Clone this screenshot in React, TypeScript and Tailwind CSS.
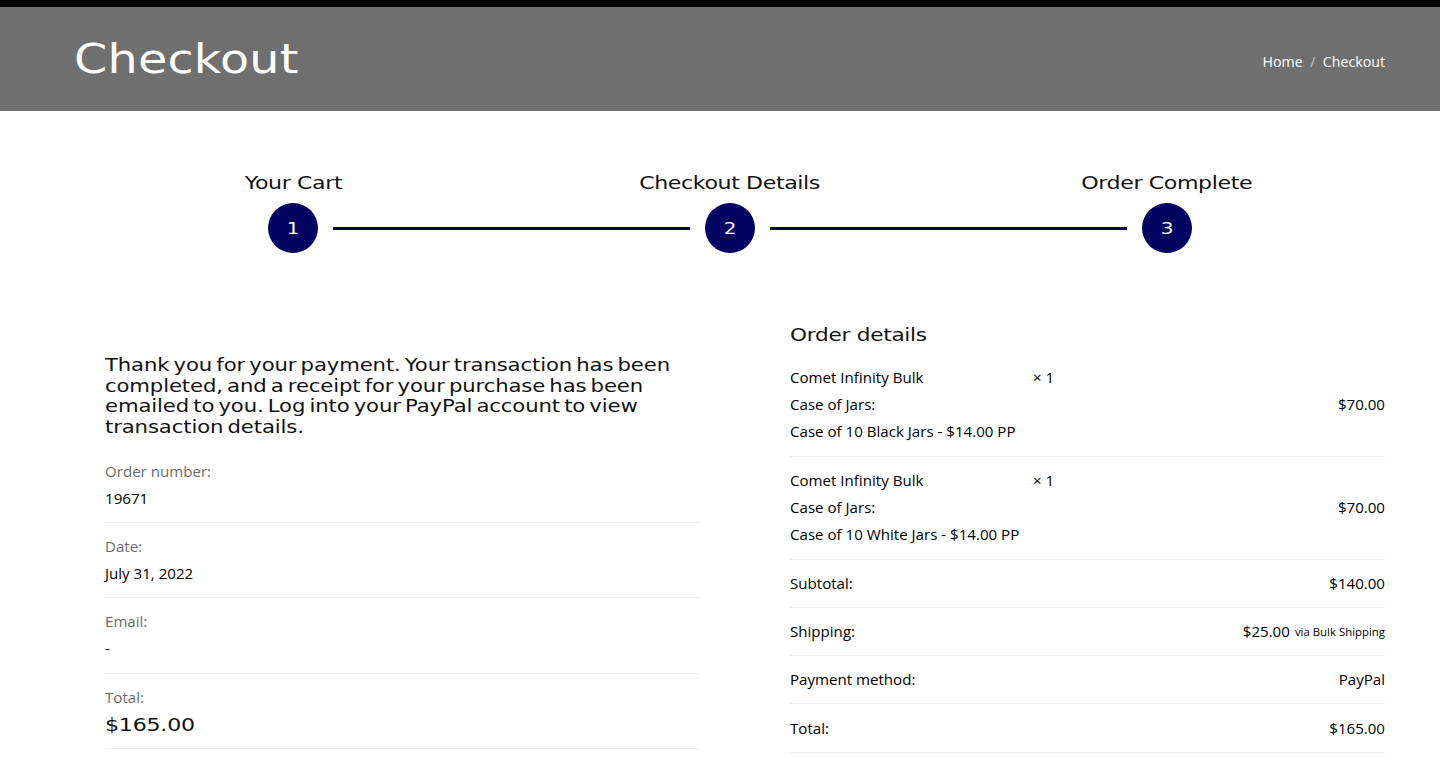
import React from 'react';

const display = "font-['DejaVu_Sans',sans-serif]";

const steps = ['Your Cart', 'Checkout Details', 'Order Complete'];

const summary = [
    { label: 'Order number:', value: '19671' },
    { label: 'Date:', value: 'July 31, 2022' },
    { label: 'Email:', value: '-' },
];

const items = ['Case of 10 Black Jars - $14.00 PP', 'Case of 10 White Jars - $14.00 PP'];

const App: React.FC = () => {
    return (
        <div className="h-[758px] overflow-hidden bg-white text-[15.1px] leading-[27px] text-black font-['Open_Sans',sans-serif]">
            {/* Page title */}
            <header className="flex h-[111px] items-center justify-between border-t-[7px] border-black bg-[#6f6f6f] pl-[74px] pr-[55px] text-white">
                <h1 className={`${display} inline-block origin-left scale-x-[1.19] text-[40px] leading-[48px] font-normal tracking-[0.2px]`}>
                    Checkout
                </h1>
                <nav className="mt-[5px] flex items-center text-[14.2px]">
                    <span>Home</span>
                    <span className="mx-[7.5px] text-white/60">/</span>
                    <span>Checkout</span>
                </nav>
            </header>

            {/* Steps */}
            <div className="flex items-end pl-[268px] pt-[60px]">
                {steps.map((step, i) => (
                    <React.Fragment key={step}>
                        {i > 0 && <div className="mx-[15px] mb-[23px] h-[3px] w-[357px] bg-[#020249]" />}
                        <div className="flex w-[50px] flex-col items-center">
                            <span className={`${display} mb-[8px] scale-x-[1.3] whitespace-nowrap text-[17px] leading-[24px] tracking-[-0.3px] text-[#111]`}>
                                {step}
                            </span>
                            <div className={`${display} flex h-[50px] w-[50px] items-center justify-center rounded-full bg-[#020260] text-[16px] text-white`}>
                                <span className="inline-block scale-x-[1.25]">{i + 1}</span>
                            </div>
                        </div>
                    </React.Fragment>
                ))}
            </div>

            <div className="flex pl-[105px] pr-[55px]">
                {/* Thank you + summary */}
                <section className="w-[594px] pt-[102px]">
                    <p className={`${display} w-[490px] origin-left scale-x-[1.21] text-[17.5px] leading-[20.7px] tracking-[-0.1px] [word-spacing:-2px] text-[#111]`}>
                        Thank you for your payment. Your transaction has been completed, and a receipt for your purchase has been emailed to you. Log into your PayPal account to view transaction details.
                    </p>
                    <div className="mt-[10px]">
                        {summary.map((row) => (
                            <div key={row.label} className="border-b border-[#eeeeee] pb-[10.3px] pt-[10px]">
                                <div className="text-[#6b6b6b]">{row.label}</div>
                                <div>{row.value}</div>
                            </div>
                        ))}
                        <div className="border-b border-[#eeeeee] pb-[10.3px] pt-[10px]">
                            <div className="text-[#6b6b6b]">Total:</div>
                            <div className={`${display} origin-left scale-x-[1.23] text-[18px] tracking-[-0.2px] text-[#111]`}>$165.00</div>
                        </div>
                    </div>
                </section>

                {/* Order details */}
                <section className="ml-[91px] w-[595px] pt-[68px]">
                    <h2 className={`${display} origin-left scale-x-[1.27] text-[17px] leading-[28px] font-normal tracking-[-0.2px] text-[#111]`}>
                        Order details
                    </h2>
                    <div className="mt-[4.5px]">
                        {items.map((item) => (
                            <div key={item} className="flex items-center justify-between border-b border-[#eeeeee] py-[10.5px]">
                                <div>
                                    <div className="flex">
                                        <span className="w-[243px]">Comet Infinity Bulk</span>
                                        <span>× 1</span>
                                    </div>
                                    <div>Case of Jars:</div>
                                    <div>{item}</div>
                                </div>
                                <span>$70.00</span>
                            </div>
                        ))}
                        <div className="flex justify-between border-b border-[#eeeeee] py-[10px]">
                            <span>Subtotal:</span>
                            <span>$140.00</span>
                        </div>
                        <div className="flex justify-between border-b border-[#eeeeee] py-[10px]">
                            <span>Shipping:</span>
                            <span className="flex items-center gap-[5px]">
                                $25.00 <span className="text-[11.4px]">via Bulk Shipping</span>
                            </span>
                        </div>
                        <div className="flex justify-between border-b border-[#eeeeee] py-[10px]">
                            <span>Payment method:</span>
                            <span>PayPal</span>
                        </div>
                        <div className="flex justify-between border-b border-[#eeeeee] pb-[10px] pt-[11px]">
                            <span>Total:</span>
                            <span>$165.00</span>
                        </div>
                    </div>
                </section>
            </div>
        </div>
    );
};

export default App;
